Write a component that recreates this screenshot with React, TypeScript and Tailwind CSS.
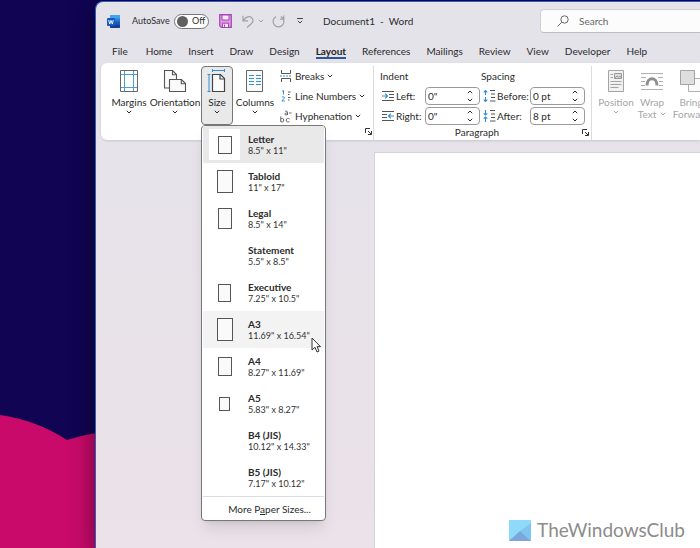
import type { ReactNode } from "react";

const tabs = [
  "File",
  "Home",
  "Insert",
  "Draw",
  "Design",
  "Layout",
  "References",
  "Mailings",
  "Review",
  "View",
  "Developer",
  "Help",
];

const paperSizes = [
  { name: "Letter", size: '8.5" x 11"', icon: "w-[14px] h-[18px]" },
  { name: "Tabloid", size: '11" x 17"', icon: "w-4 h-[23px]" },
  { name: "Legal", size: '8.5" x 14"', icon: "w-[14px] h-[21px]" },
  { name: "Statement", size: '5.5" x 8.5"', icon: "" },
  { name: "Executive", size: '7.25" x 10.5"', icon: "w-[13px] h-[18px]" },
  { name: "A3", size: '11.69" x 16.54"', icon: "w-4 h-[23px]" },
  { name: "A4", size: '8.27" x 11.69"', icon: "w-[14px] h-[19px]" },
  { name: "A5", size: '5.83" x 8.27"', icon: "w-[11px] h-[14px]" },
  { name: "B4 (JIS)", size: '10.12" x 14.33"', icon: "" },
  { name: "B5 (JIS)", size: '7.17" x 10.12"', icon: "" },
];

function Chevron({ up = false }: { up?: boolean }) {
  return (
    <svg
      viewBox="0 0 6 4"
      className="w-[6px] h-1 shrink-0"
      fill="none"
      stroke="currentColor"
      strokeWidth="1"
    >
      <path d={up ? "M.8 3.2 3 1l2.2 2.2" : "M.8.8 3 3 5.2.8"} />
    </svg>
  );
}

function WordLogo() {
  return (
    <svg viewBox="0 0 13 13" className="w-[13px] h-[13px]">
      <rect x="3" width="10" height="13" rx="1" fill="#2b7cd3" />
      <path d="M4 0h8a1 1 0 0 1 1 1v2.5H3V1a1 1 0 0 1 1-1z" fill="#41a5ee" />
      <path d="M3 6.5h10v3H3z" fill="#185abd" />
      <path d="M3 9.5h10V12a1 1 0 0 1-1 1H4a1 1 0 0 1-1-1z" fill="#103f91" />
      <rect y="3" width="8" height="8" rx="1" fill="#185abd" />
      <path
        d="m1.7 5 1 4L4 5.4 5.3 9l1-4"
        fill="none"
        stroke="#fff"
        strokeWidth=".9"
      />
    </svg>
  );
}

function SaveIcon() {
  return (
    <svg viewBox="0 0 13 14" className="w-[13px] h-[14px]" fill="none">
      <path
        d="M.7.7h11.6v12.6H2.2L.7 11.8z"
        fill="#dc9be0"
        stroke="#a845b5"
        strokeWidth="1.2"
      />
      <path d="M3 1h7v5H3z" fill="#f6e9f8" stroke="#a845b5" />
      <path d="M3.5 13V9.2h6V13" fill="#f6e9f8" stroke="#a845b5" />
      <path d="M5.5 10.5V13" stroke="#a845b5" />
    </svg>
  );
}

function MarginsIcon() {
  return (
    <svg viewBox="0 0 20 24" className="w-5 h-6" fill="none">
      <path d="M5.5 1v22M14.5 1v22M1 5.5h18M1 18.5h18" stroke="#4a9fe0" />
      <path d="M1.5 1.5h17v21h-17z" stroke="#666" />
    </svg>
  );
}

function OrientationIcon() {
  return (
    <svg
      viewBox="0 0 24 24"
      className="w-6 h-6"
      fill="#fafafa"
      stroke="#555"
      strokeWidth="1.1"
    >
      <path d="M1.5 1.5h8l4 4V19h-12z" />
      <path d="M9.5 1.5v4.3h4" fill="none" />
      <path d="M6.5 10.5h12l4 4v8h-16z" />
      <path d="M18.3 10.5v4.3h4" fill="none" />
    </svg>
  );
}

function SizeIcon() {
  return (
    <svg viewBox="0 0 20 24" className="w-5 h-6" fill="none">
      <path
        d="M5.5 5.5h8l4 4v13h-12z"
        fill="#fafafa"
        stroke="#444"
        strokeWidth="1.2"
      />
      <path d="M13 5.5V10h4.5" stroke="#444" strokeWidth="1.2" />
      <path
        d="M5 1.5h13M5.5 0v3M17.5 0v3M2 5.5v17M.5 5.5h3M.5 22.5h3"
        stroke="#2f8fd8"
      />
    </svg>
  );
}

function ColumnsIcon() {
  return (
    <svg viewBox="0 0 20 24" className="w-5 h-6" fill="none">
      <path d="M1.5 1.5h16v21h-16z" fill="#fafafa" stroke="#666" />
      <path
        d="M4 6.5h5M4 9.5h5M4 12.5h5M4 15.5h5M11 6.5h5M11 9.5h5M11 12.5h5M11 15.5h5"
        stroke="#2f8fd8"
      />
    </svg>
  );
}

function BreaksIcon() {
  return (
    <svg viewBox="0 0 12 12" className="w-3 h-3" fill="none">
      <path d="M1.5 0v3.5h9V0M1.5 12V8.5h9V12" stroke="#555" />
      <path d="M0 6h12" stroke="#2f8fd8" strokeDasharray="2 1" />
    </svg>
  );
}

function LineNumbersIcon() {
  return (
    <svg viewBox="0 0 12 12" className="w-3 h-3" fill="none">
      <path
        d="M2 1.5 3.5.5v4M2 7.5c.5-1 2.5-1 2.3.4-.1.9-2 1.8-2.3 3.1h2.8"
        stroke="#2f8fd8"
      />
      <path d="M8 2h2.5M8 4.5h1.5M8 7.5h2.5M8 10h1.5" stroke="#555" />
    </svg>
  );
}

function HyphenationIcon() {
  return (
    <svg
      viewBox="0 0 12 13"
      className="w-3 h-[13px]"
      fill="none"
      stroke="#555"
      strokeWidth=".9"
    >
      <path d="M5 1.6c.5-.7 2.5-.8 2.5.7V5M7.5 3c-1.5 0-2.7.3-2.7 1.2S6.8 5.2 7.5 4M9 3h2.5" />
      <path d="M.8 6.5V12M.8 9.2c.7-1.2 3-1.2 3 1s-2.3 2.2-3 1M9.5 9c-1.2-1-3.3-.7-3.3 1.2s2.1 2.2 3.3 1.2" />
    </svg>
  );
}

function IndentIcon({ right = false }: { right?: boolean }) {
  return (
    <svg viewBox="0 0 12 11" className="w-3 h-[11px]" fill="none">
      <path
        d={
          right
            ? "M0 .5h12M0 3.5h5M0 6.5h5M0 9.5h12"
            : "M0 .5h12M7 3.5h5M7 6.5h5M0 9.5h12"
        }
        stroke="#555"
      />
      <path
        d={
          right
            ? "M12 5H6.5M8.8 2.7 6.5 5l2.3 2.3"
            : "M0 5h5.5M3.2 2.7 5.5 5 3.2 7.3"
        }
        stroke="#2f8fd8"
        strokeWidth="1.2"
      />
    </svg>
  );
}

function SpacingIcon({ after = false }: { after?: boolean }) {
  return (
    <svg viewBox="0 0 13 12" className="w-[13px] h-3" fill="none">
      <path
        d={
          after
            ? "M2.5 0v5M.7 3.3 2.5 5l1.8-1.7M2.5 12V7M.7 8.7 2.5 7l1.8 1.7"
            : "M2.5 5V.5M.7 2.3 2.5.5l1.8 1.8M2.5 7v4.5M.7 9.7l1.8 1.8 1.8-1.8"
        }
        stroke="#2f8fd8"
        strokeWidth="1.1"
      />
      <path d="M7 .5h5M8 4h4M8 7.5h4M7 11h5.5" stroke="#555" />
    </svg>
  );
}

function LauncherIcon() {
  return (
    <svg
      viewBox="0 0 7 7"
      className="w-[7px] h-[7px]"
      fill="none"
      stroke="#333"
    >
      <path d="M.5 5V.5H5M3 3l3 3M6.5 3v3.5H3" />
    </svg>
  );
}

function PositionIcon() {
  return (
    <svg viewBox="0 0 18 24" className="w-[18px] h-6" fill="none">
      <path d="M1.5 1.5h15v21h-15z" fill="#f1f1f1" stroke="#a3a3a3" />
      <path d="M7.5 4.5h7v5h-7z" fill="#ddd" stroke="#999" />
      <path d="m8 9 2-2 1.5 1.2L13 7l1.5 2" stroke="#999" />
      <path
        d="M3.5 5.5H6M3.5 8.5H6M3.5 12.5h11M3.5 15.5h11M3.5 18.5h8"
        stroke="#a3a3a3"
      />
    </svg>
  );
}

function WrapIcon() {
  return (
    <svg viewBox="0 0 22 24" className="w-[22px] h-6" fill="none">
      <path
        d="M0 4.5h22M0 8.5h5M17 8.5h5M0 12.5h4M18 12.5h4M0 16.5h4M18 16.5h4M0 20.5h22"
        stroke="#b0b0b0"
      />
      <path d="M6 16.5c0-9 10-9 10 0" stroke="#8f8f8f" strokeWidth="3" />
    </svg>
  );
}

function ForwardIcon() {
  return (
    <svg viewBox="0 0 24 24" className="w-6 h-6" fill="none">
      <path d="M9.5 9.5h13v13h-13z" fill="#fafafa" stroke="#b0b0b0" />
      <path d="M1.5 1.5h14v14h-14z" fill="#dedede" stroke="#a3a3a3" />
    </svg>
  );
}

function BigButton({
  icon,
  label,
  width,
}: {
  icon: ReactNode;
  label: string;
  width: string;
}) {
  return (
    <button className={`${width} flex shrink-0 flex-col items-center pt-[3px]`}>
      {icon}
      <span className="mt-[3px]">{label}</span>
      <span className="mt-[2px]">
        <Chevron />
      </span>
    </button>
  );
}

function SmallButton({ icon, label }: { icon: ReactNode; label: string }) {
  return (
    <button className="h-5 flex items-center whitespace-nowrap">
      <span className="w-[15px]">{icon}</span>
      {label}
      <span className="ml-[3px]">
        <Chevron />
      </span>
    </button>
  );
}

function Field({
  id,
  label,
  labelWidth,
  value,
  icon,
}: {
  id: string;
  label: string;
  labelWidth: string;
  value: string;
  icon: ReactNode;
}) {
  return (
    <div className="h-5 flex items-center">
      <span className="w-[14px]">{icon}</span>
      <label htmlFor={id} className={`${labelWidth} whitespace-nowrap`}>
        {label}
      </label>
      <div className="h-[18px] w-[55px] flex items-center border border-[#9a9a9a] rounded bg-white">
        <input
          id={id}
          defaultValue={value}
          className="w-0 flex-1 pl-[2px] outline-none"
        />
        <div className="w-3 flex flex-col gap-1">
          <button aria-label={`Increase ${id}`} className="leading-none">
            <Chevron up />
          </button>
          <button aria-label={`Decrease ${id}`} className="leading-none">
            <Chevron />
          </button>
        </div>
      </div>
    </div>
  );
}

function Cursor() {
  return (
    <svg
      viewBox="0 0 10 16"
      className="absolute right-[3px] top-[26px] z-10 w-[10px] h-4"
    >
      <path
        d="M1 1v12l3-2.7L6 15l2-.9L6.1 9.7H9.5z"
        fill="#fff"
        stroke="#333"
      />
    </svg>
  );
}

function SizeMenu() {
  return (
    <div className="absolute left-0 top-full z-20 w-[125px] rounded border border-[#777] bg-white px-px text-left shadow-lg">
      {paperSizes.map((paper) => (
        <button
          key={paper.name}
          className={`relative flex h-[37px] w-full items-center gap-2 pl-[6px] text-left ${
            paper.name === "Letter"
              ? "bg-[#e9e9e9]"
              : paper.name === "A3"
                ? "bg-[#f3f3f3]"
                : ""
          }`}
        >
          <span
            className={`flex h-[31px] w-[31px] items-center justify-center ${
              paper.name === "Letter" ? "bg-white" : ""
            }`}
          >
            {paper.icon && (
              <span className={`${paper.icon} border border-[#555] bg-[#fafafa]`} />
            )}
          </span>
          <span className="whitespace-nowrap">
            <span className="block font-bold">{paper.name}</span>
            <span className="block text-[9px] leading-3 text-[#333]">
              {paper.size}
            </span>
          </span>
          {paper.name === "A3" && <Cursor />}
        </button>
      ))}
      <button className="h-6 w-full border-t border-[#dcdce4] pl-3 text-center">
        More P<u>a</u>per Sizes...
      </button>
    </div>
  );
}

function TitleBar() {
  return (
    <header className="flex h-[38px] items-center pl-[11px]">
      <WordLogo />
      <span className="ml-3 w-[38px] text-[9px]">AutoSave</span>
      <button
        role="switch"
        aria-checked="false"
        className="ml-1 flex h-[15px] w-[35px] items-center gap-1 rounded-full border border-[#777] bg-white px-[2px] text-[9px]"
      >
        <span className="h-[11px] w-[11px] rounded-full bg-[#606060]" />
        Off
      </button>
      <button aria-label="Save" className="ml-[10px]">
        <SaveIcon />
      </button>
      <button
        aria-label="Undo"
        className="ml-[10px] flex items-center gap-1 text-[#a0a0a6]"
      >
        <svg
          viewBox="0 0 12 13"
          className="w-3 h-[13px]"
          fill="none"
          stroke="currentColor"
          strokeWidth="1.2"
        >
          <path d="M1 .8v5h5M1.2 5.6C4 1.5 7.5.8 9.7 2.8c2 2 1.5 4-.2 5.7L5 12.5" />
        </svg>
        <Chevron />
      </button>
      <button aria-label="Redo" className="ml-2 text-[#a0a0a6]">
        <svg
          viewBox="0 0 13 13"
          className="w-[13px] h-[13px]"
          fill="none"
          stroke="currentColor"
          strokeWidth="1.2"
        >
          <path d="M8 4.2h3.8V.5M4 1.6a5.4 5.4 0 1 0 5 0l2.8 2.4" />
        </svg>
      </button>
      <button aria-label="Customize toolbar" className="ml-3">
        <svg
          viewBox="0 0 6 6"
          className="w-[6px] h-[6px]"
          fill="none"
          stroke="#444"
        >
          <path d="M0 .5h6M.8 2.8 3 5l2.2-2.2" />
        </svg>
      </button>
      <h1 className="ml-5 whitespace-pre">Document1  -  Word</h1>
      <label className="ml-auto flex h-6 w-[160px] items-center gap-[10px] rounded-l border border-r-0 border-[#d0cfd6] border-b-[#bdbcc4] bg-[#fcfcfd] pl-4">
        <svg
          viewBox="0 0 12 12"
          className="w-3 h-3"
          fill="none"
          stroke="#666"
        >
          <circle cx="7.5" cy="4.5" r="3.7" />
          <path d="M4.8 7.2.5 11.5" />
        </svg>
        <input
          type="search"
          placeholder="Search"
          aria-label="Search"
          className="w-0 flex-1 outline-none placeholder:text-[#666]"
        />
      </label>
    </header>
  );
}

function Ribbon() {
  return (
    <section className="ml-[5px] flex h-[77px] rounded-l-md bg-white pt-[3px] shadow-sm">
      <div className="flex w-[273px] shrink-0 border-r border-[#dcdce0] pl-2">
        <div className="flex h-[59px] gap-px">
          <BigButton icon={<MarginsIcon />} label="Margins" width="w-10" />
          <BigButton
            icon={<OrientationIcon />}
            label="Orientation"
            width="w-[50px]"
          />
          <div className="relative">
            <button className="flex h-[59px] w-8 flex-col items-center rounded-sm border border-[#777] bg-[#e9e9e9] pt-[2px]">
              <SizeIcon />
              <span className="mt-[3px]">Size</span>
              <span className="mt-[2px]">
                <Chevron />
              </span>
            </button>
            <SizeMenu />
          </div>
          <BigButton icon={<ColumnsIcon />} label="Columns" width="w-[42px]" />
        </div>
        <div className="ml-1">
          <SmallButton icon={<BreaksIcon />} label="Breaks" />
          <SmallButton icon={<LineNumbersIcon />} label="Line Numbers" />
          <SmallButton icon={<HyphenationIcon />} label="Hyphenation" />
        </div>
        <button
          aria-label="Page setup options"
          className="mb-[5px] ml-auto mr-[2px] self-end"
        >
          <LauncherIcon />
        </button>
      </div>

      <div className="w-[218px] shrink-0 border-r border-[#dcdce0] pl-[6px]">
        <div className="flex gap-px">
          <div>
            <h2 className="h-5 leading-5">Indent</h2>
            <div className="pl-[2px]">
              <Field
                id="left"
                label="Left:"
                labelWidth="w-[29px]"
                value={'0"'}
                icon={<IndentIcon />}
              />
              <Field
                id="right"
                label="Right:"
                labelWidth="w-[29px]"
                value={'0"'}
                icon={<IndentIcon right />}
              />
            </div>
          </div>
          <div>
            <h2 className="h-5 leading-5">Spacing</h2>
            <div className="pl-[2px]">
              <Field
                id="before"
                label="Before:"
                labelWidth="w-[33px]"
                value="0 pt"
                icon={<SpacingIcon />}
              />
              <Field
                id="after"
                label="After:"
                labelWidth="w-[33px]"
                value="8 pt"
                icon={<SpacingIcon after />}
              />
            </div>
          </div>
        </div>
        <div className="flex h-3 items-center pr-[2px]">
          <span className="flex-1 pr-2 text-center">Paragraph</span>
          <button aria-label="Paragraph options">
            <LauncherIcon />
          </button>
        </div>
      </div>

      <div className="flex min-w-0 flex-1 overflow-hidden pl-1 text-[#a6a6a6]">
        <BigButton icon={<PositionIcon />} label="Position" width="w-10" />
        <button className="flex w-8 shrink-0 flex-col items-center pt-[3px]">
          <WrapIcon />
          <span className="mt-[3px]">Wrap</span>
          <span className="flex items-center gap-1">
            Text <Chevron />
          </span>
        </button>
        <button className="flex w-[46px] shrink-0 flex-col items-center pt-[3px]">
          <ForwardIcon />
          <span className="mt-[3px]">Bring</span>
          <span>Forward</span>
        </button>
      </div>
    </section>
  );
}

export default function App() {
  return (
    <div className="relative flex min-h-screen overflow-hidden bg-[#100453] pl-[95px] pt-px font-['Lato','Open_Sans',sans-serif] text-[10px] leading-3 text-[#2b2b2b]">
      <svg
        viewBox="0 0 160 140"
        className="absolute bottom-0 left-0 h-[140px] w-[160px]"
        fill="#c90a6b"
      >
        <path d="M0 7q36 5 67 25 40-12 93-14v122H0z" />
      </svg>
      <main className="relative flex min-w-0 flex-1 flex-col overflow-hidden rounded-tl-lg border-l border-t border-[#2b5fc0] bg-linear-to-b from-[#e4e3ea] to-[#ece2e9] shadow-[0_8px_24px_rgba(0,0,0,0.5)]">
        <TitleBar />
        <nav className="flex h-[23px] items-center pb-px pl-4">
          {tabs.map((tab) => (
            <a
              key={tab}
              href="#"
              className={`mr-4 first:mr-[18px] ${
                tab === "Layout"
                  ? "border-b-2 border-[#2b579a] pt-[2px] font-bold text-[#222]"
                  : ""
              }`}
            >
              {tab}
            </a>
          ))}
        </nav>
        <Ribbon />
        <article className="ml-[278px] mt-3 flex flex-1 items-end justify-end border-l border-t border-[#d3d2d8] bg-white pb-[6px] pr-[15px]">
          <div className="flex items-center gap-[6px]">
            <svg viewBox="0 0 22 21" className="w-[22px] h-[21px]">
              <path d="M0 0h22v21H0z" fill="#8edaf8" />
              <path d="M22 3v18L11 11z" fill="#80c4f0" />
              <path d="m0 21 11-10 11 10z" fill="#7ba6dc" />
            </svg>
            <span className="text-[19px] leading-6 text-[#8c8c8c]">
              TheWindowsClub
            </span>
          </div>
        </article>
      </main>
    </div>
  );
}
